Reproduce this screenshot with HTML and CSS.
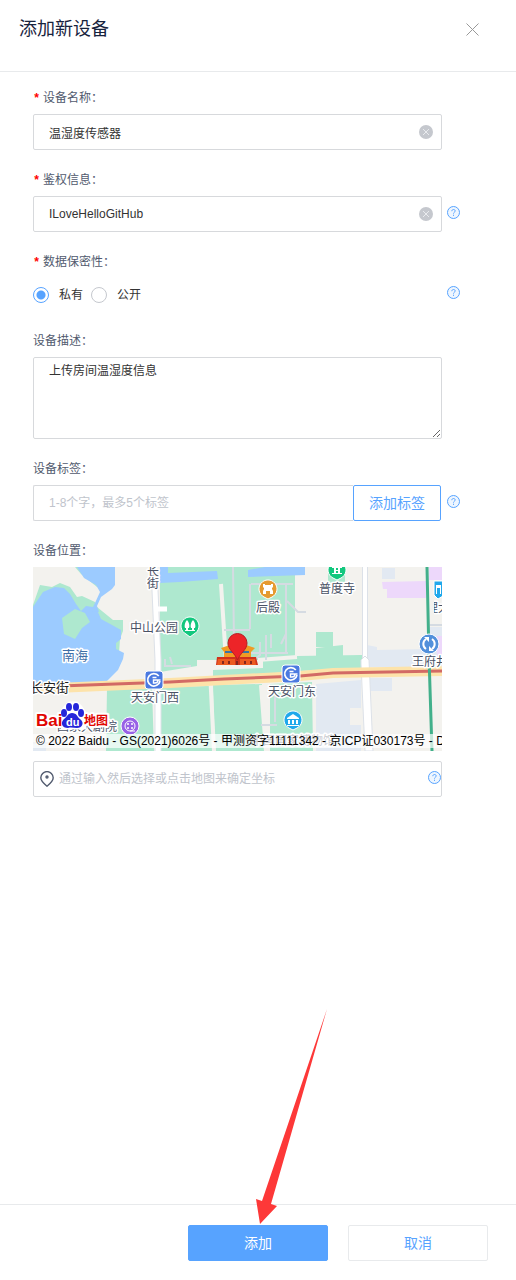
FILE: index.html
```html
<!DOCTYPE html>
<html lang="zh-CN">
<head>
<meta charset="utf-8">
<meta name="viewport" content="width=device-width, initial-scale=1">
<title>添加新设备</title>
<link rel="stylesheet" href="styles.css">
</head>
<body>
<svg class="sprite" aria-hidden="true">
  <symbol id="i-help" viewBox="0 0 13 13"><circle cx="6.5" cy="6.5" r="6" fill="#eef6ff" stroke="#57a3ff"/><path d="M4.800 5.200c0-1 .7-1.700 1.700-1.700s1.700.6 1.700 1.500c0 1.200-1.700 1.300-1.700 2.600M6.500 8.700v1.200" fill="none" stroke="#57a3ff"/></symbol>
  <symbol id="i-clear" viewBox="0 0 14 14"><circle cx="7" cy="7" r="7" fill="#c5c8ce"/><path d="M4 4l6 6M10 4l-6 6" stroke="#e9ebee" fill="none"/></symbol>
  <symbol id="i-metro" viewBox="0 0 20 20">
    <rect x="1" y="1" width="18" height="18" rx="3" fill="#4b7ae0" stroke="#fff"/>
    <path d="M14.800 6A6.200 6.200 0 1 0 16 11" fill="none" stroke="#fff" stroke-width="1.700"/>
    <path d="M8.500 7.500h4M16.500 10H9.500v3h1.500a3 3 0 0 0 3-3" fill="none" stroke="#fff" stroke-width="1.400"/>
  </symbol>
</svg>
<form class="drawer">
  <header class="drawer-header">
    <h1 class="drawer-title">添加新设备</h1>
    <button class="icon-button" type="button" aria-label="关闭"><svg class="close-icon" viewBox="0 0 13 13"><path d="M.5.5l12 12M12.5.5l-12 12"/></svg></button>
  </header>
  <main class="drawer-body">
    <div class="field">
      <label class="label required" for="name">设备名称：</label>
      <div class="box"><input class="box-input" id="name" type="text" value="温湿度传感器"><button class="icon-button" type="button" aria-label="清除"><svg class="clear-icon"><use href="#i-clear"/></svg></button></div>
    </div>
    <div class="field">
      <label class="label required" for="auth">鉴权信息：</label>
      <div class="box"><input class="box-input" id="auth" type="text" value="ILoveHelloGitHub"><button class="icon-button" type="button" aria-label="清除"><svg class="clear-icon"><use href="#i-clear"/></svg></button></div>
      <button class="icon-button help" type="button" aria-label="帮助"><svg class="help-icon"><use href="#i-help"/></svg></button>
    </div>
    <div class="field" role="radiogroup" aria-labelledby="privacy">
      <span class="label required" id="privacy">数据保密性：</span>
      <div class="radios">
        <label class="radio-label"><input class="radio" type="radio" name="privacy" checked>私有</label>
        <label class="radio-label"><input class="radio" type="radio" name="privacy">公开</label>
      </div>
      <button class="icon-button help" type="button" aria-label="帮助"><svg class="help-icon"><use href="#i-help"/></svg></button>
    </div>
    <div class="field">
      <label class="label" for="desc">设备描述：</label>
      <textarea class="textarea" id="desc">上传房间温湿度信息</textarea>
    </div>
    <div class="field">
      <label class="label" for="tags">设备标签：</label>
      <div class="tag-row"><input class="tag-input" id="tags" type="text" placeholder="1-8个字，最多5个标签"><button class="tag-button" type="button">添加标签</button></div>
      <button class="icon-button help" type="button" aria-label="帮助"><svg class="help-icon"><use href="#i-help"/></svg></button>
    </div>
    <div class="field">
      <label class="label" for="place">设备位置：</label>
      <div class="location">
        <div class="map">
          <svg class="map-canvas" viewBox="0 0 409 184" preserveAspectRatio="xMinYMin slice" role="img" aria-label="地图">
            <rect width="409" height="184" fill="#f3f2ee"/>
            <g fill="#aee8cf">
              <path d="M7 18l12 2 8-4 10 4 7 10 5-1 13 6 2 5L80 53h10v11l-3 8-1 14-18 22-20 2-30 1H0V38z"/>
              <path d="M42 0l6 7 16 13 5 1V0z"/>
              <path d="M127 0h135v93H127z"/>
              <path d="M127 91h37v8l-37 6zM180 103l50-2v-7l34-3v-2l65-1v13l-62 3-38 3-49 3z"/>
              <path d="M283 65h17v15h-17zM283 81l27-3v15h-27zM315 90l14-2v6h-14zM295 0h17v15l-17 1z"/>
              <path d="M74 121h45l2 63H73zM127 120l50-1 3 65h-52zM180 118l49-1 2 67h-49zM237 117l42-2 1 69h-43z"/>
            </g>
            <g fill="#e2e9f2">
              <path d="M349 1h13v11h-13zM334 78l10 2v3l50-1v18h-59zM397 60h12v41h-12zM337 111h22v13h-22z"/>
              <path d="M283 117l45-4v28h-11v17h11v26h-45zM0 176h13v8H0zM240 0h20v8h-20z"/>
            </g>
            <g fill="#9ccbff">
              <path d="M0 40l10-15 12-5 9 1 6 6 6 10 5 7 5-5 7 1 4 3 4 9 11 6 9 5v9l-5 4v6l8 4-1 6-5 11-16 16-15 4-20 2-25 1-9-9z"/>
              <path d="M44 0h38v18l-3 4-11 8-4 9 2 6-8-1 4-8 5-11-4-7-12-7z"/>
              <path d="M127 0h8v6l49-2 1 8-38 3-20 1zM215 3l17-3h40v8l-57 2z"/>
            </g>
            <path d="M29 51l13-9 10 4 5 9-8 6-7 11-11-5z" fill="#aee8cf"/>
            <path d="M349 15l44-1v17h-39v-9h-4zM396 0h13v13h-13zM404 69h5v22h-5z" fill="#edd8fb"/>
            <g fill="none" stroke="#f3f2ee" stroke-width="4">
              <path d="M188 17l5 77M228 118l5 66M177 104l4 80M165 96l20-1M225 93l39-3M234 116v68"/>
            </g>
            <g fill="none" stroke="#d5dbe2" stroke-width="2">
              <path d="M200 0l1 75M218 17h42M253 17v69M217 63h-26M217 17v45M227 75v13l-7 6M233 68v25M238 67v14M248 77l5-10M217 86h38M254 34l11 11h8M132 92v7h26M137 90l2 7M242 128v27M228 158h16M0 176h35M397 58h12"/>
            </g>
            <path d="M121 0l4 93v91" fill="none" stroke="#dce1e8" stroke-width="7"/>
            <path d="M121 0l4 93v91M125 42h9" fill="none" stroke="#fff" stroke-width="5"/>
            <path d="M332 0v88l4 96" fill="none" stroke="#dce1e8" stroke-width="6"/>
            <path d="M332 0v88l4 96" fill="none" stroke="#fff" stroke-width="4"/>
            <path d="M328 97v-4l4-4 4 4 4 91h-8z" fill="#fff" stroke="#dce1e8"/>
            <path d="M0 122l137-6 54-3 76-4 33-3 109-2" fill="none" stroke="#fde3aa" stroke-width="10"/>
            <path d="M0 120l137-5 54-3 76-3 33-3 109-2" fill="none" stroke="#d26a65" stroke-width="3"/>
            <path d="M394 0l2 90 3 94" fill="none" stroke="#42b08b" stroke-width="3"/>
            <path d="M184 90h39l2 8h-42z" fill="#cf321c"/>
            <path d="M185 92h17v6h-18zM207 92h15l1 6h-16z" fill="#ec5a20"/>
            <path d="M188 81l9-3h16l9 3-4 4v5h-27v-5z" fill="#f09b24"/>
            <path d="M192 85h24" stroke="#3873a5" stroke-width="2"/>
            <path d="M190 97v-3M196 97v-3M204 98v-4M212 97v-3M218 97v-3" stroke="#84261d" stroke-width="2"/>
            <path d="M204.500 93C202 86 195 83 195 76a9.500 9.500 0 0 1 19 0c0 7-7 10-9.500 17z" fill="#ed2428" stroke="#b61b22"/>
            <g class="map-label">
              <text x="114" y="9">长</text><text x="114" y="21">街</text>
              <text x="97" y="65">中山公园</text><text x="223" y="45">后殿</text><text x="286" y="26">普度寺</text>
              <text x="98" y="135">天安门西</text><text x="235" y="129">天安门东</text><text x="379" y="99">王府井</text>
              <text x="24" y="164">国家大剧院</text><text x="218" y="178">中国国家博物馆</text>
            </g>
            <svg x="401" y="30" width="8" height="20"><text class="map-label" x="-8" y="15">理大</text></svg>
            <text class="map-label water" x="29" y="93">南海</text>
            <text class="map-label street" x="-3" y="125">长安街</text>
            <g stroke="#fff">
              <path d="M157 70l-4-3a9 9 0 1 1 8 0zM304 13l-4-2a9 9 0 1 1 8 0z" fill="#13c77e"/>
              <path d="M235 32l-4-2a9 9 0 1 1 8 0z" fill="#e59a30"/>
              <path d="M260 163l-4-2a9 9 0 1 1 8 0z" fill="#20a8eb"/>
              <path d="M405 32l-4-4V14h9v15z" fill="#20a8eb"/>
              <circle cx="97" cy="159" r="9" fill="#9862e6"/>
              <circle cx="396" cy="77" r="10" fill="#5290db"/>
            </g>
            <use href="#i-metro" x="111" y="103" width="20" height="20"/>
            <use href="#i-metro" x="248" y="97" width="20" height="20"/>
            <g fill="#fff">
              <path d="M154 53c2 2 3 6 2 8h-1v2h2v1h-5v-1h1v-2h-1c-1-2 0-6 2-8zM160 53c2 2 3 6 2 8h-1v2h1v1h-5v-1h2v-2h-1c-1-2 0-6 2-8z"/>
              <path d="M230 17h2v1h6v-1h2v3l-1 1v1l1 2v3h-3v-3h-4v3h-3v-3l1-2v-1l-1-1z"/>
              <path d="M299 6h10v1h-10zM299 0h10v1h-10zM301 1h2v5h-2zM305 1h2v5h-2zM303 3h2v1h-2z"/>
              <path d="M254 151l6-4 6 4v1h-12zM255 153h2v4h-2zM259 153h2v4h-2zM263 153h2v4h-2zM254 158h12v1h-12zM403 18h5v9h-1v-6h-3v6h-1z"/>
            </g>
            <path d="M393 72a6 6 0 0 0 0 10M399 82a6 6 0 0 0 0-10" fill="none" stroke="#fff" stroke-width="2"/>
            <path d="M391 70h5v5zM401 84h-5v-5z" fill="#fff"/>
            <g fill="none" stroke="#fff"><circle cx="97" cy="159" r="5"/><path d="M97 164h5"/></g>
            <g fill="#fff"><circle cx="95" cy="157" r="1"/><circle cx="99" cy="157" r="1"/><circle cx="95" cy="161" r="1"/><circle cx="99" cy="161" r="1"/></g>
            <path d="M29 161V144l4-5 3-3h8l4 4 4 6v15z" fill="#fff" stroke="#fff" stroke-width="3" stroke-linejoin="round"/>
            <text class="logo logo-latin" x="3" y="159">Bai</text>
            <text class="logo logo-han" x="51" y="158">地图</text>
            <g fill="#2526da">
              <ellipse cx="31" cy="146" rx="3" ry="4"/><ellipse cx="36" cy="140" rx="3" ry="4"/><ellipse cx="43" cy="140" rx="3" ry="4"/><ellipse cx="48" cy="146" rx="3" ry="4"/>
              <path d="M39 146c5 0 5 4 8 6 5 4 2 9-3 9-3 0-6-1-9 0-6 0-8-5-4-9 3-2 4-6 8-6z"/>
            </g>
            <text class="logo-du" x="33" y="159">du</text>
          </svg>
          <div class="map-copyright">© 2022 Baidu - GS(2021)6026号 - 甲测资字11111342 - 京ICP证030173号 - Data © 百度智图</div>
        </div>
        <div class="box box-place">
          <svg class="pin-icon" viewBox="0 0 14 16"><path d="M7 15.200C4 12.800.8 10 .8 6.800a6.200 6.200 0 0 1 12.400 0C13.200 10 10 12.800 7 15.200z"/><circle cx="7" cy="6" r="1"/></svg>
          <input class="box-input" id="place" type="text" placeholder="通过输入然后选择或点击地图来确定坐标">
          <button class="icon-button help" type="button" aria-label="帮助"><svg class="help-icon"><use href="#i-help"/></svg></button>
        </div>
      </div>
    </div>
  </main>
  <footer class="drawer-footer">
    <div class="submit">
      <button class="button primary" type="submit">添加</button>
      <svg class="arrow" viewBox="0 0 72 216" aria-hidden="true"><path d="M71 0L15 195l6 2L4 215 0 190l6 2z"/></svg>
    </div>
    <button class="button" type="button">取消</button>
  </footer>
</form>
</body>
</html>
```
FILE: styles.css
```css
* { box-sizing: border-box; }

body {
  margin: 0;
  background: #fff;
  color: #333;
  font: 12px/20px "Liberation Sans", "Noto Sans CJK SC", sans-serif;
}

button, input, textarea {
  margin: 0;
  font: inherit;
  color: inherit;
}

.sprite { display: none; }

.drawer {
  display: flex;
  flex-direction: column;
  min-height: 100vh;
}

.drawer-header {
  display: flex;
  justify-content: space-between;
  align-items: flex-start;
  height: 72px;
  padding: 17px 37px 0 19px;
  border-bottom: 1px solid #e8eaec;
}

.drawer-title {
  margin: 0;
  font-size: 18px;
  line-height: 24px;
  font-weight: 400;
  color: #17233d;
}

.icon-button {
  display: flex;
  flex: none;
  align-items: center;
  justify-content: center;
  padding: 0;
  border: 0;
  background: none;
  cursor: pointer;
}

.drawer-header .icon-button { height: 24px; }

.close-icon {
  width: 13px;
  height: 13px;
  fill: none;
  stroke: #999;
}

.drawer-body {
  flex: 1;
  padding: 16px 56px 20px 33px;
}

.field {
  display: grid;
  grid-template-columns: minmax(0, 1fr) 13px;
  column-gap: 5px;
  row-gap: 6px;
  align-items: center;
  margin-bottom: 20px;
}

.label {
  display: flex;
  grid-column: 1 / -1;
  color: #515a6e;
}

.required::before {
  content: "*";
  width: 10px;
  color: #f00;
  font-family: "Liberation Mono", monospace;
  font-weight: 700;
  line-height: 22px;
  height: 20px;
}

.box {
  display: flex;
  align-items: center;
  height: 36px;
  padding: 0 8px 0 15px;
  border: 1px solid #d7d9dc;
  border-radius: 2px;
}

.box-input {
  flex: 1;
  min-width: 0;
  height: 34px;
  padding: 0;
  border: 0;
  outline: 0;
  background: none;
}

::placeholder {
  color: #c0c4cc;
  opacity: 1;
}

.clear-icon { width: 14px; height: 14px; }

.help-icon { width: 13px; height: 13px; }

.help { margin-bottom: 4px; }

.radios {
  display: flex;
  gap: 8px;
  height: 33px;
}

.radio-label {
  display: flex;
  align-items: center;
  gap: 10px;
}

.radio {
  appearance: none;
  width: 16px;
  height: 16px;
  border: 1px solid #c5c8ce;
  border-radius: 50%;
  background: #fff;
}

.radio:checked {
  border-color: #57a3ff;
  background: radial-gradient(circle, #57a3ff 4px, #fff 5px);
}

.textarea {
  width: 100%;
  height: 82px;
  padding: 3px 15px;
  border: 1px solid #d7d9dc;
  border-radius: 2px;
  outline: 0;
  resize: vertical;
}

.tag-row {
  display: flex;
  height: 36px;
  padding-right: 1px;
}

.tag-input {
  flex: 1;
  min-width: 0;
  padding: 0 15px;
  border: 1px solid #d7d9dc;
  border-right: 0;
  border-radius: 2px 0 0 2px;
  outline: 0;
}

.tag-button {
  width: 88px;
  padding: 0;
  border: 1px solid #57a3ff;
  border-radius: 2px;
  background: #fff;
  color: #57a3ff;
  font-size: 14px;
}

.location {
  display: flex;
  flex-direction: column;
  gap: 10px;
}

.map {
  position: relative;
  height: 184px;
  overflow: hidden;
}

.map-canvas {
  display: block;
  width: 100%;
  height: 100%;
}

.map-label {
  fill: #4a5265;
  stroke: #fff;
  stroke-width: 3px;
  stroke-linejoin: round;
  paint-order: stroke;
  font-size: 12px;
}

.water { fill: #3f6fa8; font-size: 13px; }

.street { fill: #222; font-size: 13px; }

.logo {
  fill: #e10602;
  stroke: #fff;
  stroke-width: 4px;
  stroke-linejoin: round;
  paint-order: stroke;
  font-weight: 700;
}

.logo-latin { font-size: 17px; }

.logo-han { font-size: 12px; }

.logo-du {
  fill: #fff;
  font-size: 11px;
  font-weight: 700;
}

.map-copyright {
  position: absolute;
  left: 0;
  right: 0;
  bottom: 3px;
  height: 14px;
  padding-left: 3px;
  overflow: hidden;
  background: rgba(255, 255, 255, 0.7);
  color: #000;
  line-height: 14px;
  white-space: nowrap;
}

.box-place {
  gap: 5px;
  padding: 0 0 0 6px;
}

.pin-icon {
  flex: none;
  width: 14px;
  height: 16px;
  fill: none;
  stroke: #515a6e;
  stroke-width: 1.4;
}

.drawer-footer {
  display: flex;
  justify-content: flex-end;
  gap: 20px;
  padding: 20px 28px 19px;
  border-top: 1px solid #e8eaec;
}

.submit { position: relative; }

.button {
  width: 140px;
  height: 36px;
  padding: 0;
  border: 1px solid #e8eaec;
  border-radius: 2px;
  background: #fff;
  color: #57a3ff;
  font-size: 14px;
}

.primary {
  border-color: #57a3ff;
  background: #57a3ff;
  color: #fff;
}

.arrow {
  position: absolute;
  left: 68px;
  bottom: 100%;
  width: 72px;
  height: 216px;
  fill: #fd3838;
  pointer-events: none;
}
```
